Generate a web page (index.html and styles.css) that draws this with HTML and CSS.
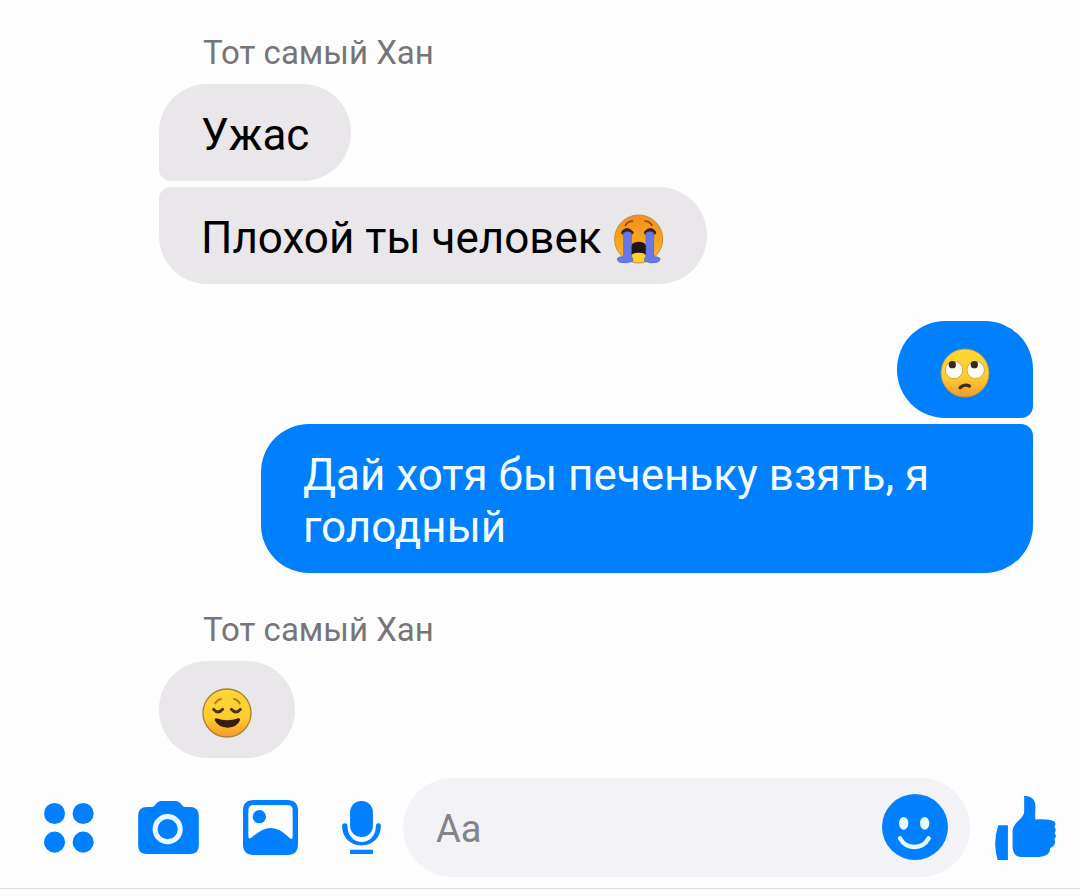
FILE: index.html
```html
<!DOCTYPE html>
<html lang="ru">
<head>
<meta charset="utf-8">
<meta name="viewport" content="width=device-width, initial-scale=1">
<title>Тот самый Хан</title>
<link rel="stylesheet" href="styles.css">
</head>
<body>
<svg class="defs" width="0" height="0" aria-hidden="true">
  <defs>
    <linearGradient id="face" x1="0" y1="0" x2="0" y2="1">
      <stop offset="0" stop-color="#fdd835"/>
      <stop offset=".6" stop-color="#fdcc2e"/>
      <stop offset="1" stop-color="#f8982c"/>
    </linearGradient>
    <linearGradient id="cry" x1="0" y1="0" x2="0" y2="1">
      <stop offset="0" stop-color="#f48f1d"/>
      <stop offset=".5" stop-color="#faa31d"/>
      <stop offset="1" stop-color="#ffb92a"/>
    </linearGradient>
  </defs>
</svg>
<main class="chat">
  <section class="group">
    <h2 class="sender">Тот самый Хан</h2>
    <p class="bubble first">Ужас</p>
    <p class="bubble last">Плохой ты человек <svg class="emoji" viewBox="0 0 156 156" role="img" aria-label="Рыдает">
      <circle cx="77" cy="78" r="72" fill="url(#cry)" stroke="#c58a3c" stroke-width="3"/>
      <path d="M37 37q6-11 21-13M96 24q15 2 21 13" fill="none" stroke="#7a4a17" stroke-width="5" stroke-linecap="round"/>
      <path d="M30 59q12-17 26 0M98 59q14-17 26 0" fill="none" stroke="#382319" stroke-width="11" stroke-linecap="round"/>
      <path d="M53 128V107q0-21 24-21t24 21v21z" fill="#201515"/>
      <path d="M53 133q0-14 24-14t24 14q0 15-24 15t-24-15z" fill="#ffd02c"/>
      <path d="M32 59q11-6 23 0v71q6 5 5 14-18 9-39 4-9-3-8-12 8-6 14-4 5-2 5-8z" fill="#6679e8" stroke="#4e65bd" stroke-width="2"/>
      <path d="M122 59q-11-6-23 0v71q-6 5-5 14 18 9 39 4 9-3 8-12-8-6-14-4-5-2-5-8z" fill="#6679e8" stroke="#4e65bd" stroke-width="2"/>
    </svg></p>
  </section>
  <section class="group own">
    <p class="bubble first"><svg class="emoji" viewBox="0 0 156 156" role="img" aria-label="Закатывает глаза">
      <circle cx="78" cy="78" r="72" fill="url(#face)" stroke="#b49a4d" stroke-width="3"/>
      <circle cx="45" cy="69" r="26" fill="#fffdf4" stroke="#b98a25" stroke-width="2"/>
      <circle cx="110" cy="69" r="26" fill="#fffdf4" stroke="#b98a25" stroke-width="2"/>
      <circle cx="40" cy="53" r="11" fill="#39281f"/>
      <circle cx="106" cy="53" r="11" fill="#39281f"/>
      <path d="M63 122q13-12 28-5" fill="none" stroke="#43291a" stroke-width="10" stroke-linecap="round"/>
    </svg></p>
    <p class="bubble last">Дай хотя бы печеньку взять, я голодный</p>
  </section>
  <section class="group">
    <h2 class="sender">Тот самый Хан</h2>
    <p class="bubble"><svg class="emoji" viewBox="0 0 156 156" role="img" aria-label="Облегчение">
      <circle cx="78" cy="78" r="72" fill="url(#face)" stroke="#a98135" stroke-width="4"/>
      <path d="M43 49q6-11 17-13M99 36q11 2 17 13" fill="none" stroke="#b57b20" stroke-width="6" stroke-linecap="round"/>
      <path d="M38 67q13 16 27 0M91 67q14 16 27 0" fill="none" stroke="#49311a" stroke-width="9" stroke-linecap="round"/>
      <path d="M46 94q32 12 66 0 6-1 5 6-9 22-37 22T41 100q0-7 5-6z" fill="#35200f"/>
    </svg></p>
  </section>
</main>
<form class="composer">
  <div class="tools">
    <button class="tool" type="button" aria-label="Ещё">
      <svg width="50" height="50" viewBox="41 68 152 152"><circle cx="73" cy="100" r="32"/><circle cx="160" cy="100" r="32"/><circle cx="73" cy="187" r="32"/><circle cx="160" cy="187" r="32"/></svg>
    </button>
    <button class="tool" type="button" aria-label="Камера">
      <svg width="61" height="53" viewBox="324 62 183 160"><path d="M350 80h15q5 0 8-4l8-9q5-5 12-5h45q7 0 12 5l8 9q3 4 8 4h15q26 0 26 26v90q0 26-26 26H350q-26 0-26-26v-90q0-26 26-26z"/><circle class="cut-line" cx="413" cy="147" r="38" stroke-width="15"/></svg>
    </button>
    <button class="tool" type="button" aria-label="Галерея">
      <svg width="55" height="55" viewBox="69 57 165 165"><path fill-rule="evenodd" d="M101 57h101q32 0 32 32v101q0 32-32 32H101q-32 0-32-32V89q0-32 32-32zM101 72q-16 0-16 16v78q0 10 9 4 18-15 33-23 25-12 50 0 14 7 32 24 9 7 9-4V88q0-16-16-16z"/><circle cx="118" cy="107" r="20"/></svg>
    </button>
    <button class="tool" type="button" aria-label="Голосовое сообщение">
      <svg width="39" height="53" viewBox="366 62 117 160"><rect x="390" y="62" width="69" height="109" rx="34"/><path d="M366 137q0-8 8-8t8 8c0 65 86 65 86 0q0-8 8-8t7 8c0 79-117 79-117 0z"/><path d="M390 209h69v13h-69z"/></svg>
    </button>
  </div>
  <div class="field">
    <input class="message" type="text" placeholder="Aa" aria-label="Сообщение">
    <button class="tool" type="button" aria-label="Эмодзи">
      <svg width="66" height="66" viewBox="66 72 198 198"><circle cx="165" cy="171" r="99"/><ellipse class="cut" cx="131" cy="160" rx="14" ry="19"/><ellipse class="cut" cx="194" cy="160" rx="14" ry="19"/><path class="cut-line" d="M120 205q14 26 43 26t43-26" stroke-width="13" stroke-linecap="round"/></svg>
    </button>
  </div>
  <button class="tool" type="button" aria-label="Нравится">
    <svg width="61" height="64" viewBox="404 77 184 193"><path d="M414 165h29v105h-31q-16-53 2-105zM492 77c18 0 34 7 34 32 0 15-2 26 0 39 21-2 46-1 57 6 5 5 4 10 0 16 5 6 5 12 1 19 5 6 5 13-1 18 4 8 2 14-2 20q-6 6-11 7 1 27-42 27h-45c-18 0-26-14-26-33v-43c0-32 37-37 35-65z"/></svg>
  </button>
</form>
</body>
</html>
```
FILE: styles.css
```css
* {
  box-sizing: border-box;
}

body {
  margin: 0;
  background: #fefdfe;
  color: #000;
  font-family: Roboto, "Noto Sans", sans-serif;
}

.defs {
  position: absolute;
}

.chat {
  display: flex;
  flex-direction: column;
  gap: 37px;
  padding: 33px 47px 20px 159px;
}

.group {
  display: flex;
  flex-direction: column;
  align-items: flex-start;
  gap: 6px;
}

.group.own {
  align-items: flex-end;
}

.sender {
  margin: 0 0 5px 44px;
  color: #77757a;
  font-size: 33px;
  font-weight: 400;
  line-height: 40px;
}

.bubble {
  max-width: 772px;
  margin: 0;
  padding: 25px 42px 20px;
  border-radius: 48px;
  background: #e9e7ea;
  font-size: 44px;
  line-height: 52px;
}

.bubble.first {
  border-bottom-left-radius: 12px;
}

.bubble.last {
  border-top-left-radius: 12px;
}

.own .bubble {
  background: #007fff;
  color: #f2fdff;
}

.own .bubble.first {
  border-radius: 48px 48px 12px 48px;
}

.own .bubble.last {
  border-radius: 48px 12px 48px 48px;
}

.emoji {
  display: inline-block;
  width: 52px;
  height: 52px;
  margin: -6px 0;
  vertical-align: -6px;
}

.composer {
  display: flex;
  align-items: center;
  gap: 25px;
  padding: 0 24px 11px 44px;
  border-bottom: 1px solid #dddde0;
}

.tools {
  display: flex;
  flex: none;
  align-items: center;
  gap: 44px;
  margin-right: -3px;
}

.tool {
  display: block;
  flex: none;
  padding: 0;
  border: 0;
  background: none;
  color: #007fff;
  cursor: pointer;
}

.tool svg {
  display: block;
  fill: currentColor;
}

.tool .cut {
  fill: #e8fcff;
}

.tool .cut-line {
  fill: none;
  stroke: #e8fcff;
}

.field {
  display: flex;
  flex: 1;
  align-items: center;
  min-width: 0;
  padding: 16px 22px 17px 33px;
  border-radius: 50px;
  background: #f3f2f7;
}

.message {
  flex: 1;
  min-width: 0;
  height: 52px;
  padding: 4px 0 0;
  border: 0;
  outline: 0;
  background: none;
  color: #000;
  font-family: inherit;
  font-size: 38px;
}

.message::placeholder {
  color: #858388;
  opacity: 1;
}
```
